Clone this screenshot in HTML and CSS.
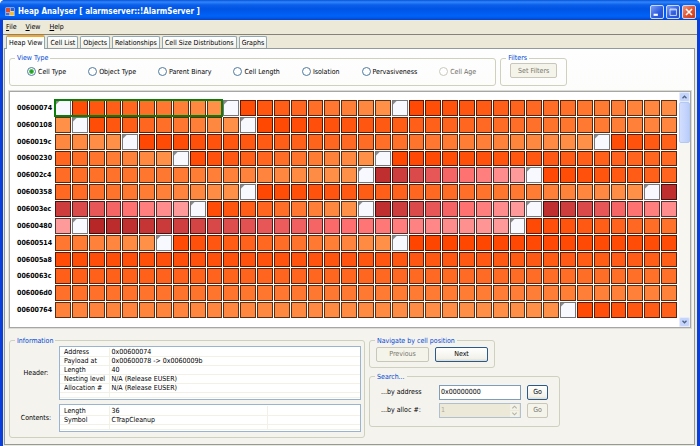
FILE: index.html
```html
<!DOCTYPE html>
<html lang="en">
<head>
<meta charset="utf-8">
<title>Heap Analyser</title>
<link rel="stylesheet" href="styles.css">
</head>
<body>
<div class="window">
  <header class="titlebar">
    <svg class="app-icon" viewBox="0 0 10 10" aria-hidden="true">
      <rect x="0.5" y="0.5" width="9" height="8.5" rx="0.5" fill="#e8eefc"/>
      <rect x="1" y="1" width="4" height="4.5" fill="#d8502c"/>
      <rect x="5.5" y="1" width="3.5" height="3" fill="#2f5fd0"/>
      <rect x="1" y="6" width="3.5" height="2.5" fill="#3c6fe0"/>
      <rect x="5" y="4.5" width="4" height="4" fill="#f3bd3a"/>
    </svg>
    <h1 class="title">Heap Analyser [ alarmserver::!AlarmServer ]</h1>
    <div class="window-buttons">
      <button class="win-btn" type="button" aria-label="Minimize"><svg viewBox="0 0 14 14"><rect x="3" y="9" width="5" height="2.500" fill="#fff"/></svg></button>
      <button class="win-btn" type="button" aria-label="Maximize"><svg viewBox="0 0 14 14"><path d="M3.500 3.500h7.500v7.500h-7.500zM3.500 4.500h7.500" fill="none" stroke="#dfe8ff"/></svg></button>
      <button class="win-btn win-btn-close" type="button" aria-label="Close"><svg viewBox="0 0 14 14"><path d="M3.500 3.500l7 7M10.500 3.500l-7 7" stroke="#fff" stroke-width="1.800" fill="none"/></svg></button>
    </div>
  </header>

  <div class="client">
    <nav class="menubar">
      <a href="#"><u>F</u>ile</a>
      <a href="#"><u>V</u>iew</a>
      <a href="#"><u>H</u>elp</a>
    </nav>

    <div class="tabs" role="tablist">
      <button class="tab tab-active" type="button" role="tab" aria-selected="true">Heap View</button>
      <button class="tab" type="button" role="tab">Cell List</button>
      <button class="tab" type="button" role="tab">Objects</button>
      <button class="tab" type="button" role="tab">Relationships</button>
      <button class="tab" type="button" role="tab">Cell Size Distributions</button>
      <button class="tab" type="button" role="tab">Graphs</button>
    </div>

    <main class="page">
      <div class="options">
        <fieldset class="group view-type">
          <legend>View Type</legend>
          <div class="radios">
            <label><input type="radio" name="view" checked>Cell Type</label>
            <label><input type="radio" name="view">Object Type</label>
            <label><input type="radio" name="view">Parent Binary</label>
            <label><input type="radio" name="view">Cell Length</label>
            <label><input type="radio" name="view">Isolation</label>
            <label><input type="radio" name="view">Pervasiveness</label>
            <label class="disabled"><input type="radio" name="view" disabled>Cell Age</label>
          </div>
        </fieldset>
        <fieldset class="group filters">
          <legend>Filters</legend>
          <button class="btn" type="button" disabled>Set Filters</button>
        </fieldset>
      </div>

      <section class="heap">
        <div class="cells" id="cells"></div>
        <div class="scrollbar">
          <button class="scroll-btn" type="button" aria-label="Scroll up"><svg viewBox="0 0 10 10"><path d="M2.500 6.500L5 4l2.500 2.500" fill="none" stroke="#4d6185" stroke-width="1.600"/></svg></button>
          <div class="scroll-track"><div class="scroll-thumb"></div></div>
          <button class="scroll-btn" type="button" aria-label="Scroll down"><svg viewBox="0 0 10 10"><path d="M2.500 3.500L5 6l2.500-2.500" fill="none" stroke="#4d6185" stroke-width="1.600"/></svg></button>
        </div>
      </section>

      <div class="details">
        <fieldset class="group info">
          <legend>Information</legend>
          <div class="info-grid">
            <span class="info-label" id="header-label">Header:</span>
            <div class="list">
              <table aria-labelledby="header-label">
                <tr><th>Address</th><td>0x00600074</td></tr>
                <tr><th>Payload at</th><td>0x00600078 -&gt; 0x0060009b</td></tr>
                <tr><th>Length</th><td>40</td></tr>
                <tr><th>Nesting level</th><td>N/A (Release EUSER)</td></tr>
                <tr><th>Allocation #</th><td>N/A (Release EUSER)</td></tr>
                <tr class="filler"><th></th><td></td></tr>
              </table>
            </div>
            <span class="info-label" id="contents-label">Contents:</span>
            <div class="list">
              <table aria-labelledby="contents-label">
                <tr><th>Length</th><td>36</td><td class="extra"></td></tr>
                <tr><th>Symbol</th><td>CTrapCleanup</td><td class="extra"></td></tr>
                <tr class="filler"><th></th><td></td><td class="extra"></td></tr>
              </table>
            </div>
          </div>
        </fieldset>

        <div class="side">
          <fieldset class="group navigate">
            <legend>Navigate by cell position</legend>
            <div class="nav-buttons">
              <button class="btn" type="button" disabled>Previous</button>
              <button class="btn" type="button">Next</button>
            </div>
          </fieldset>
          <fieldset class="group search">
            <legend>Search...</legend>
            <div class="search-grid">
              <label for="address">...by address</label>
              <input class="field" id="address" type="text" value="0x00000000">
              <button class="btn" type="button">Go</button>
              <label for="alloc">...by alloc #:</label>
              <div class="spinner">
                <input class="field" id="alloc" type="text" value="1" disabled>
                <svg class="spin-arrows" viewBox="0 0 8 12" aria-hidden="true"><path d="M0 0h8v5.500H0zM0 6.500h8V12H0z" fill="#f3f2e8"/><path d="M2 4l2-2 2 2M2 8l2 2 2-2" fill="none" stroke="#b4b2a2"/></svg>
              </div>
              <button class="btn" type="button" disabled>Go</button>
            </div>
          </fieldset>
        </div>
      </div>
    </main>
  </div>
</div>
<script src="heap.js"></script>
</body>
</html>
```

FILE: styles.css
```css
* { box-sizing: border-box; }

body {
  margin: 0;
  background: #fff;
  color: #000;
  font: 7px/10px "DejaVu Sans Condensed", "DejaVu Sans", sans-serif;
}

button, input { font: inherit; color: inherit; margin: 0; }

.window {
  display: flex;
  flex-direction: column;
  min-height: 100vh;
  padding: 0 3px 3px;
  border-radius: 5px 5px 0 0;
  background: #0a3fdc;
}

.titlebar {
  display: flex;
  align-items: center;
  gap: 3px;
  height: 20px;
  margin: 0 -3px;
  padding: 3px 4px 0 5px;
  border-radius: 5px 5px 0 0;
  background: linear-gradient(#0a50d8 0, #2f86fa 2px, #0a5eea 5px, #0054e3 9px, #0062f8 16px, #0057e8 18px, #0a3fc0 20px);
}

.app-icon { width: 10px; height: 10px; }

.title {
  flex: 1;
  margin: 0;
  color: #fff;
  font: bold 8px/12px "DejaVu Sans Condensed", "DejaVu Sans", sans-serif;
  white-space: nowrap;
}

.window-buttons { display: flex; gap: 2px; }

.win-btn {
  width: 14px;
  height: 14px;
  padding: 0;
  border: 1px solid #cdd9fa;
  border-radius: 2px;
  background: linear-gradient(135deg, #7d9ff2, #2a5ae0 60%, #2450cc);
}
.win-btn svg { display: block; width: 12px; height: 12px; }
.win-btn-close { background: linear-gradient(135deg, #f0967c, #e0502c 55%, #c83c18); }

.client {
  flex: 1;
  display: flex;
  flex-direction: column;
  padding-bottom: 1px;
  background: #ece9d8;
}

.menubar {
  display: flex;
  gap: 9px;
  padding: 2px 3px;
  border-bottom: 1px solid #858377;
}
.menubar a { color: #000; text-decoration: none; }

.tabs {
  display: flex;
  align-items: flex-end;
  gap: 2px;
  padding: 0 3px;
}
.tab {
  height: 12px;
  padding: 0 2px;
  border: 1px solid #91a7b4;
  border-bottom: 0;
  border-radius: 2px 2px 0 0;
  background: linear-gradient(#fff, #f1f0e8);
  white-space: nowrap;
}
.tab-active {
  height: 14px;
  margin-bottom: -1px;
  border-top: 2px solid #f5a52a;
  background: #fdfdfb;
  z-index: 1;
}

.page {
  flex: 1;
  margin: 0 2px 0 1px;
  padding: 5px 3px 6px 4px;
  border: 1px solid #919b9c;
  background: linear-gradient(#fefefe, #f4f3ee 70%);
}

.group {
  min-width: 0;
  margin: 0;
  padding: 0 3px;
  border: 1px solid #d0d0bf;
  border-radius: 3px;
}
.group legend {
  margin-left: 2px;
  padding: 0 2px;
  color: #0046d5;
  line-height: 8px;
}

.options { display: flex; gap: 4px; }

.radios { display: flex; gap: 22px; padding: 4px 16px 8px 14px; }
.radios label { display: flex; align-items: center; gap: 2px; height: 11px; white-space: nowrap; }
.radios input {
  appearance: none;
  width: 9px;
  height: 9px;
  border: 1px solid #4f7ba3;
  border-radius: 50%;
  background: #fff;
}
.radios input:checked { background: radial-gradient(circle, #21a121 0 1px, #5cc05c 2px, #fff 3px); }
.radios input:disabled { border-color: #cac8bb; }
.disabled { color: #6d6c64; }

.btn {
  height: 15px;
  padding: 0 6px;
  border: 1px solid #2a5a8c;
  border-radius: 2px;
  background: linear-gradient(#fff, #f2f1ea 80%, #dedbcc);
}
.btn:disabled { border-color: #c9c7ba; background: #f5f4ea; color: #77766c; }

.filters .btn { width: 47px; margin: 1px 6px 4px; }

.heap {
  display: flex;
  justify-content: space-between;
  gap: 2px;
  margin-top: 5px;
  border: 1px solid #a6a6a6;
  outline: 1px solid #dcdcd6;
  background: #fff;
}

.cells {
  flex: 1;
  position: relative;
  display: grid;
  grid-template-columns: 37px repeat(37, 1fr);
  gap: 1px;
  align-items: center;
  padding: 8px 0 9px 7px;
}
.row-label {
  font: bold 7px/10px "DejaVu Sans Condensed", "DejaVu Sans", sans-serif;
}
.cell {
  aspect-ratio: 1;
  border: 1px solid rgba(0, 0, 0, 0.65);
}
.cell-header {
  border-color: #777;
  background: linear-gradient(135deg, #8a8a8a 2px, #f8f8ff 3px);
}
.selection {
  position: absolute;
  grid-area: 1 / 2 / 2 / 12;
  inset: -1px;
  border: 2px solid #0a7d0a;
}

.scrollbar {
  display: flex;
  flex-direction: column;
  width: 11px;
  background: #f7f6f1;
}
.scroll-btn {
  height: 10px;
  padding: 0;
  border: 1px solid #e4ebfc;
  border-radius: 2px;
  background: #c5d4fb;
}
.scroll-btn svg { display: block; width: 9px; height: 8px; }
.scroll-track { flex: 1; }
.scroll-thumb {
  height: 41px;
  border: 1px solid #b4c8f4;
  border-radius: 2px;
  background: linear-gradient(90deg, #d2defd, #bacdfa);
}

.details {
  display: flex;
  align-items: flex-start;
  gap: 4px;
  margin-top: 9px;
}
.info { flex: 0 1 356px; }
.info-grid {
  display: grid;
  grid-template-columns: 46px 1fr;
  gap: 4px 0;
  align-items: center;
  padding: 1px 0 5px;
}
.info-label { text-align: center; }
.list {
  padding: 1px 0;
  border: 1px solid #9ab4d0;
  background: #fff;
}
.list table {
  width: 100%;
  border-collapse: collapse;
  table-layout: fixed;
}
.list th, .list td {
  height: 9px;
  padding: 0 0 0 4px;
  border-bottom: 1px solid #f3f1e6;
  font-weight: normal;
  line-height: 8px;
  text-align: left;
  white-space: nowrap;
}
.list th { width: 49px; border-right: 1px solid #f3f1e6; }
.list td { padding-left: 2px; }
.list .extra { width: 93px; border-left: 1px solid #f3f1e6; }
.list .filler th, .list .filler td { height: 5px; line-height: 4px; }

.side { display: flex; flex-direction: column; align-items: flex-start; gap: 5px; }
.nav-buttons { display: flex; gap: 6px; padding: 2px 3px 5px; }
.nav-buttons .btn { width: 53px; }

.search-grid {
  display: grid;
  grid-template-columns: 52px 82px 21px;
  gap: 3px 6px;
  align-items: center;
  padding: 4px 8px 8px;
}
.search-grid .btn { padding: 0; }
.field {
  width: 100%;
  height: 15px;
  padding: 0 1px;
  border: 1px solid #7f9db9;
  background: #fff;
}
.field:disabled { border-color: #b0c0cf; background: #ece9d8; color: #aca899; }
.spinner { display: flex; position: relative; }
.spin-arrows { position: absolute; top: 1px; right: 2px; width: 9px; height: 13px; }
```

FILE: heap.js
```js
const COLUMNS = 37;
const ROWS = 13;
const START = 0x600074;

// Each run is [row, column, kind]; it lasts until the next run begins.
const runs = [
  [0, 0, "free"], [0, 10, "free"], [0, 20, "free"], [1, 1, "free"], [1, 11, "free"],
  [2, 4, "free"], [2, 32, "free"], [3, 7, "free"], [3, 19, "free"],
  [4, 18, "used"], [4, 28, "free"], [5, 11, "free"], [5, 35, "used"],
  [6, 8, "free"], [6, 18, "used"], [6, 28, "used"], [7, 1, "used"],
  [7, 27, "free"], [8, 6, "free"], [8, 20, "free"], [12, 30, "free"], [13, 10, "free"]
];

function shade(kind, t) {
  if (kind === "used") {
    const v = Math.round(120 * t);
    return `rgb(${Math.min(255, 178 + v)}, ${34 + v}, ${34 + v})`;
  }
  return `rgb(255, ${Math.round(69 + 75 * t)}, ${Math.round(72 * t)})`;
}

const grid = document.getElementById("cells");
let run = 0;
for (let i = 0; i < ROWS * COLUMNS; i++) {
  if (i % COLUMNS === 0) {
    const label = document.createElement("span");
    label.className = "row-label";
    label.textContent = (START + i * 4).toString(16).padStart(8, "0");
    grid.append(label);
  }
  const at = n => runs[n][0] * COLUMNS + runs[n][1];
  while (at(run + 1) <= i) run++;
  const cell = document.createElement("div");
  const step = i - at(run);
  cell.className = step === 0 ? "cell cell-header" : "cell";
  if (step > 0) {
    const length = at(run + 1) - at(run) - 1;
    cell.style.background = shade(runs[run][2], step / Math.max(1, length));
  }
  grid.append(cell);
}
const selection = document.createElement("div");
selection.className = "selection";
grid.append(selection);
```
